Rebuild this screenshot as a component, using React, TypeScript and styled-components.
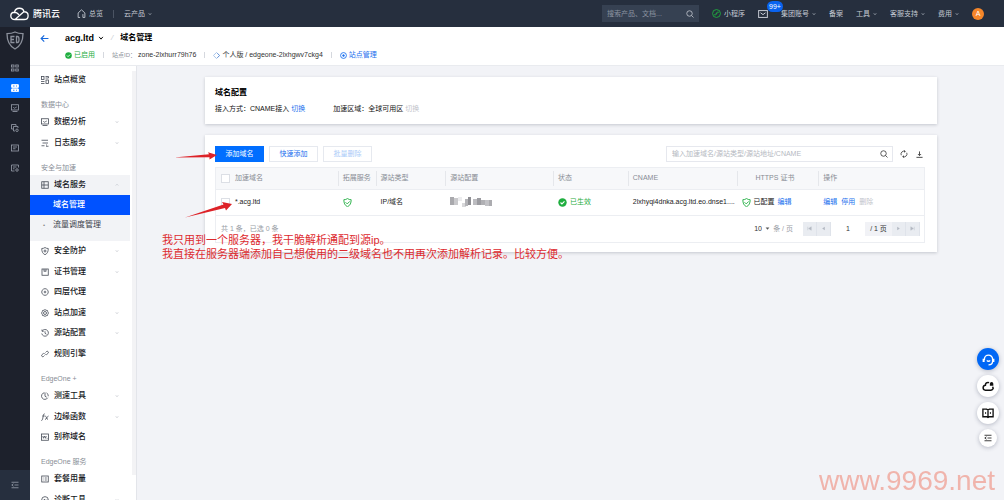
import React from "react";
import styled, { createGlobalStyle, css } from "styled-components";

const GlobalStyle = createGlobalStyle`
  *, *::before, *::after { box-sizing: border-box; }
  body {
    margin: 0;
    background: #f2f3f7;
    color: #111;
    font-family: "Liberation Sans", "Noto Sans CJK SC", sans-serif;
    font-size: 7px;
    line-height: 10px;
  }
  button, input, select { font: inherit; color: inherit; margin: 0; padding: 0; border: 0; background: none; }
  button { cursor: pointer; }
  a { color: inherit; text-decoration: none; }
  h1, h2, ul, p { margin: 0; padding: 0; list-style: none; font-size: inherit; font-weight: inherit; }
`;

/* ---------- icons ---------- */

const Svg = styled.svg<{ $w?: number }>`
  width: ${(p) => p.$w ?? 8}px;
  height: ${(p) => p.$w ?? 8}px;
  flex: none;
  display: block;
  fill: none;
  stroke: currentColor;
  stroke-width: 1.6;
`;

const shapes: Record<string, React.ReactNode> = {
  grid: (
    <>
      <rect x="1" y="1" width="5" height="6" />
      <path d="M0 11h7M0 15h7M9 1h6v3H9" />
      <rect x="10" y="8" width="5" height="7" />
    </>
  ),
  tiles: (
    <>
      <rect x="1" y="2" width="5" height="4" />
      <rect x="9.500" y="2" width="5" height="4" />
      <rect x="1" y="10" width="5" height="4" />
      <rect x="9.500" y="10" width="5" height="4" />
    </>
  ),
  server: (
    <>
      <rect x="1" y="1" width="14" height="6" rx="1" fill="currentColor" />
      <rect x="1" y="9.500" width="14" height="6" rx="1" fill="currentColor" />
      <path d="M4 4h3M10 4h2M4 12.500h3M10 12.500h2" stroke="#006eff" />
    </>
  ),
  monitor: (
    <>
      <rect x="1" y="1.500" width="14" height="10.500" />
      <path d="M3 15h10M4.500 6.500l2 2 2-1 3-1.500" />
    </>
  ),
  copy: (
    <>
      <path d="M4 10H1V1h9v3M8 14H5V5h9v3" />
      <circle cx="12" cy="12.500" r="2.500" />
    </>
  ),
  list: (
    <>
      <rect x="1" y="2" width="14" height="12" />
      <path d="M4 6h8M4 9.500h5" />
    </>
  ),
  listGear: (
    <>
      <path d="M7 14H1V2h14v5M4 6h7M4 9.500h3" />
      <circle cx="12" cy="12" r="2.500" />
    </>
  ),
  log: <path d="M1 2.500h13M3 8h11M1 13.500h6M10 12h2M10 14.500h5" />,
  domain: (
    <>
      <rect x="1.500" y="1.500" width="13" height="13" />
      <path d="M6 1.500v13M1.500 8h13" />
    </>
  ),
  shieldPlus: (
    <>
      <path d="M8 1c2 1.500 4 2 6.500 2 0 6-1.500 10-6.500 12.500C3 13 1.500 9 1.500 3 4 3 6 2.500 8 1z" />
      <path d="M8 5v6M5 8h6" />
    </>
  ),
  shieldCheck: (
    <>
      <path d="M8 1c2 1.500 4 2 6.500 2 0 6-1.500 10-6.500 12.500C3 13 1.500 9 1.500 3 4 3 6 2.500 8 1z" />
      <path d="M4.500 7.500L7.500 10.500 12 6" />
    </>
  ),
  cert: (
    <>
      <rect x="2" y="2" width="12.500" height="12.500" />
      <path d="M6 2v5l2-1.500L10 7V2" />
    </>
  ),
  layers: (
    <>
      <path d="M5 2.200a6.500 6.500 0 0 0 0 11.600M11 2.200a6.500 6.500 0 0 1 0 11.600M5 2.200l3-1 3 1M5 13.800l3 1 3-1" />
      <path d="M8 5.500v5M5.500 8h5" />
    </>
  ),
  gear: (
    <>
      <path d="M8 1l2 1.500 3 .5.500 2.500L15 8l-1.500 2.500L13 13l-3 .5L8 15l-2-1.500L3 13l-.5-2.500L1 8l1.500-2.500L3 3l3-.5z" />
      <circle cx="8" cy="8" r="3" />
    </>
  ),
  clock: (
    <>
      <path d="M2.500 4A6.700 6.700 0 1 1 1.500 9M2 1v3.500h3.500" />
      <path d="M8 4.500V8.500l3 2" />
    </>
  ),
  link: (
    <path d="M9 5l2-2c2-1.500 5 1 3.500 3.200L12 8.500c-1 1-2.500 1-3.500 0M7 11l-2 2c-2 1.500-5-1-3.500-3.200L4 7.500c1-1 2.500-1 3.500 0" />
  ),
  gauge: (
    <>
      <path d="M6.500 1.500a6.700 6.700 0 1 0 7 10" />
      <path d="M8 1v7.500l3.500 2M11 1.800a6.500 6.500 0 0 1 3.500 6.700" />
    </>
  ),
  fx: (
    <path d="M7.500 2C5.500 1 5 3 4.700 5L3 13c-.3 1.500-1.200 2-2.500 1.500M2.500 6h5M8.500 6c2.500 0 2.500 7 5.500 7M15 6c-2.500 0-4 7-7 7" />
  ),
  alias: (
    <>
      <rect x="1" y="2" width="14" height="12.500" />
      <path d="M3.500 6l1.500 4.500L7 6l2 4.500L10.500 6M11.500 10.800h1.500" />
    </>
  ),
  usage: (
    <>
      <rect x="1.500" y="2" width="13" height="12" />
      <path d="M4.500 6h1M7.500 6h4M4.500 10h1M7.500 10h4" />
    </>
  ),
  pulse: (
    <>
      <circle cx="8" cy="8" r="6.700" />
      <path d="M3 9h2.500l1.500-3 2.500 5L11 8h2" />
    </>
  ),
  collapse: <path d="M1 2.500h14M7 8h8M1 13.500h14M5 5.500L1.500 8 5 10.500" />,
  home: <path d="M5.500 15H2V7l6-5.500L14 7v8h-3.500V9" />,
  search: (
    <>
      <circle cx="7" cy="7" r="5.500" />
      <path d="M11 11l4 4" />
    </>
  ),
  mini: (
    <>
      <circle cx="8" cy="8" r="7" />
      <path d="M5.500 11.500c-2-1 0-3 1-2.500M10.500 4.500c2 1 0 3-1 2.500M6.500 11l3-6" />
    </>
  ),
  mail: (
    <>
      <rect x="1" y="2.500" width="14" height="11" />
      <path d="M4 6l4 3 4-3" />
    </>
  ),
  back: <path d="M15 8H2M7.500 2.500L2 8l5.500 5.500" strokeWidth="2" />,
  caret: <path d="M3 5l5 6 5-6" strokeWidth="2.500" />,
  caretUp: <path d="M3 10l5-5 5 5" strokeWidth="2.500" />,
  down: <path d="M2 5h12L8 12z" fill="currentColor" stroke="none" />,
  ok: (
    <>
      <circle cx="8" cy="8" r="7.500" fill="currentColor" stroke="none" />
      <path d="M4.500 8l2.500 2.500 4.500-4.500" stroke="#fff" strokeWidth="2" />
    </>
  ),
  diamond: (
    <>
      <path d="M8 1l7 7-7 7-7-7z" stroke="#9dbbe6" strokeWidth="2" />
      <path d="M10 3l5 5-5 5" stroke="#5f8fd6" strokeWidth="2" />
    </>
  ),
  target: (
    <>
      <circle cx="8" cy="8" r="6.700" strokeWidth="2" />
      <circle cx="8" cy="8" r="2" fill="currentColor" />
    </>
  ),
  refresh: (
    <>
      <path d="M2.500 10.500A6 6 0 0 1 10 2.500M13.500 5.500A6 6 0 0 1 6 13.500" />
      <path d="M8.500 0l3 3-3 2.500zM7.500 16l-3-3 3-2.500z" fill="currentColor" stroke="none" />
    </>
  ),
  download: <path d="M8 1v9M4.500 7L8 10.500 11.500 7M1 14.500h14" strokeWidth="2" />,
  first: <path d="M4 4v8M12 4L6 8l6 4z" fill="currentColor" strokeWidth="1" />,
  prev: <path d="M11 4L5 8l6 4z" fill="currentColor" stroke="none" />,
  next: <path d="M5 4l6 4-6 4z" fill="currentColor" stroke="none" />,
  last: <path d="M12 4v8M4 4l6 4-6 4z" fill="currentColor" strokeWidth="1" />,
  agent: (
    <>
      <path d="M3 8.500V7.500a5 5 0 0 1 10 0v2.500c0 2.500-2 4.500-5 4.500" />
      <path d="M2 7v4M14 7v4" strokeWidth="2.500" />
      <path d="M6 9c1 1.500 3 1.500 4 0" />
    </>
  ),
  cloudUp: (
    <>
      <path d="M9.500 3.500C6.500 2.500 4.500 4.500 4.500 7 .5 7.500.5 13.500 4.500 13.500h7.500c3 0 3.500-3 2-4.500" strokeWidth="2" />
      <path d="M10.500 5a2.300 2.300 0 0 1 4.600 0v2.800h-4.600z" fill="currentColor" stroke="none" />
    </>
  ),
  book: (
    <path d="M8 4v10M1.200 2.800h5L8 4l1.800-1.200h5v10.200h-5L8 14l-1.800-1H1.200zM4 8h1.500M10.500 8H12" strokeWidth="1.800" />
  ),
};

const Icon = ({ name, w }: { name: string; w?: number }) => (
  <Svg viewBox="0 0 16 16" $w={w} aria-hidden="true">
    {shapes[name]}
  </Svg>
);

/* ---------- page frame ---------- */

const Page = styled.div`
  height: 100vh;
  display: flex;
  flex-direction: column;
  overflow: hidden;
`;

const TopBar = styled.header`
  flex: none;
  height: 27px;
  background: #262f3e;
  color: #c4c9d2;
  display: flex;
  align-items: center;
  padding: 0 20px 0 10px;
`;

const Brand = styled.a`
  display: flex;
  align-items: center;
  gap: 4px;
  width: 67px;
  color: #fff;
  font-size: 9px;
  font-weight: 500;
`;

const BrandMark = styled.svg`
  width: 19px;
  height: 14px;
  fill: none;
  stroke: #fff;
  stroke-width: 2.6;
`;

const TopLink = styled.a`
  display: flex;
  align-items: center;
  gap: 3px;
  white-space: nowrap;
`;

const TopDivider = styled.span`
  width: 1px;
  height: 8px;
  margin: 0 10px;
  background: #4b5463;
`;

const TopRight = styled.div`
  margin-left: auto;
  display: flex;
  align-items: center;
  gap: 13px;
`;

const TopSearch = styled.label`
  width: 97px;
  height: 17px;
  padding: 0 5px;
  display: flex;
  align-items: center;
  background: #364152;
  input { flex: 1; min-width: 0; outline: 0; }
  input::placeholder { color: #8b93a0; opacity: 1; }
`;

const MailLink = styled.a`
  position: relative;
  display: block;
`;

const Badge = styled.span`
  position: absolute;
  left: 9px;
  bottom: 7px;
  padding: 0 2px;
  border-radius: 6px;
  background: #0a63f0;
  color: #fff;
  line-height: 11px;
`;

const Avatar = styled.button`
  width: 12px;
  height: 12px;
  border-radius: 50%;
  background: #f5862a;
  color: #fff;
  line-height: 12px;
`;

const Body = styled.div`
  flex: 1;
  min-height: 0;
  display: flex;
`;

const Rail = styled.nav`
  flex: none;
  width: 30px;
  background: #1d212c;
  color: #9ba1ad;
  display: flex;
  flex-direction: column;
`;

const RailLogo = styled.a`
  height: 31px;
  padding-top: 4px;
  svg { display: block; margin: 0 auto; width: 18px; height: 19px; fill: none; stroke: #8b909b; stroke-width: 1.3; }
`;

const RailItem = styled.button<{ $active?: boolean }>`
  height: 20px;
  display: grid;
  place-items: center;
  ${(p) => p.$active && css`background: #006eff; color: #fff;`}
`;

const RailFoot = styled(RailItem)`
  margin-top: auto;
  height: 30px;
  background: #262f3e;
`;

const Workspace = styled.div`
  flex: 1;
  min-width: 0;
  display: flex;
  flex-direction: column;
`;

const SiteHeader = styled.div`
  flex: none;
  height: 39px;
  background: #fff;
  border-bottom: 1px solid #e9ebef;
  padding: 5px 0 0 10px;
  display: flex;
  gap: 15px;
`;

const BackButton = styled.button`
  height: 12px;
  width: 10px;
  color: #1668dc;
`;

const TitleLine = styled.div`
  display: flex;
  align-items: center;
  gap: 7px;
  height: 12px;
  font-size: 8px;
  font-weight: 700;
  color: #000;
  i { color: #c8ccd3; font-weight: 400; }
`;

const SiteSwitch = styled.button`
  display: flex;
  align-items: center;
  gap: 4px;
  font-weight: 700;
  font-size: 9px;
`;

const InfoLine = styled.div`
  display: flex;
  align-items: center;
  margin-top: 6px;
  white-space: nowrap;
`;

const Info = styled.span<{ $tone?: string }>`
  display: flex;
  align-items: center;
  gap: 2px;
  color: ${(p) => p.$tone ?? "#333"};
  & + & {
    margin-left: 8px;
    padding-left: 9px;
    background: linear-gradient(#d5d8de, #d5d8de) left center / 1px 6px no-repeat;
  }
  em { font-style: normal; font-size: 6px; color: #8f949c; }
`;

const Columns = styled.div`
  flex: 1;
  min-height: 0;
  display: flex;
`;

/* ---------- side menu ---------- */

const Side = styled.aside`
  flex: none;
  width: 107px;
  background: #fff;
  border-right: 1px solid #e3e5ea;
  display: flex;
  overflow: hidden;
`;

const Menu = styled.nav`
  width: 100px;
  padding-top: 4px;
`;

const ScrollThumb = styled.div`
  width: 4px;
  height: 93%;
  margin: 5px 0 0 auto;
  background: #f3f3f5;
`;

const SectionLabel = styled.h2`
  padding: 8px 0 0 11px;
  line-height: 14px;
  color: #888d96;
`;

const menuRow = css`
  width: 100%;
  height: 20px;
  display: flex;
  align-items: center;
  font-size: 8px;
  color: #16181d;
`;

const MenuItem = styled.a`
  ${menuRow}
  gap: 5px;
  padding: 0 11px 0 11px;
  font-weight: 500;
  svg:first-child { color: #444a55; }
  span { flex: 1; }
  svg:nth-of-type(2) { color: #b9bdc5; }
`;

const MenuList = styled.ul`
  > li:nth-child(even) { margin-top: 1px; }
`;

const OpenGroup = styled.div`
  background: #f2f3f6;
  padding-bottom: 6px;
`;

const SubItem = styled.a<{ $active?: boolean }>`
  ${menuRow}
  padding-left: 13px;
  color: #3c414a;
  &::before { content: "•"; width: 10px; font-size: 6px; color: ${(p) => (p.$active ? "transparent" : "#888")}; }
  ${(p) => p.$active && css`background: #0052ff; color: #fff; font-weight: 500;`}
`;

type Entry = { icon: string; text: string; more?: boolean };

const MenuRow = ({ icon, text, more, up }: Entry & { up?: boolean }) => (
  <MenuItem href="#">
    <Icon name={icon} />
    <span>{text}</span>
    {more && <Icon name={up ? "caretUp" : "caret"} w={4} />}
  </MenuItem>
);

const MenuGroup = ({ items }: { items: Entry[] }) => (
  <MenuList>
    {items.map((it) => (
      <li key={it.text}><MenuRow {...it} /></li>
    ))}
  </MenuList>
);

/* ---------- content ---------- */

const Main = styled.main`
  flex: 1;
  min-width: 0;
  position: relative;
  padding: 11px 67px 11px 68px;
`;

const Card = styled.section`
  background: #fff;
  padding: 11px 12px 9px 10px;
  box-shadow: 0 1px 3px rgba(40, 50, 70, 0.22);
  & + & { margin-top: 11px; }
`;

const CardTitle = styled.h2`
  font-size: 8px;
  font-weight: 700;
  color: #000;
`;

const Facts = styled.div`
  display: flex;
  gap: 28px;
  margin-top: 6px;
  padding-bottom: 1px;
`;

const Action = styled.button<{ $off?: boolean }>`
  color: ${(p) => (p.$off ? "#bfc3ca" : "#1a6fee")};
  line-height: 10px;
  & + & { margin-left: 4px; }
`;

const Toolbar = styled.div`
  display: flex;
  align-items: center;
  gap: 5px;
  margin-bottom: 5px;
`;

const ToolButton = styled.button<{ $kind?: "primary" | "off" }>`
  width: 49px;
  height: 16px;
  border: 1px solid #e6e9ef;
  color: #1a6fee;
  ${(p) => p.$kind === "primary" && css`background: #006eff; border-color: #006eff; color: #fff;`}
  ${(p) => p.$kind === "off" && css`color: #a9cbf8;`}
`;

const FilterBox = styled.label`
  width: 227px;
  height: 16px;
  margin-left: auto;
  padding: 0 4px 0 5px;
  border: 1px solid #e6e8ee;
  display: flex;
  align-items: center;
  color: #333;
  input { flex: 1; min-width: 0; outline: 0; }
  input::placeholder { color: #b5b9c1; opacity: 1; }
`;

const IconButton = styled.button`
  width: 11px;
  height: 16px;
  display: grid;
  place-items: center;
  color: #333;
`;

const TableBox = styled.div`
  border: 1px solid #eceef2;
`;

const Table = styled.table`
  width: 100%;
  table-layout: fixed;
  border-collapse: collapse;
  text-align: left;
  white-space: nowrap;
  th, td { padding: 0 0 0 5px; overflow: hidden; text-overflow: ellipsis; }
  th { height: 21px; background: #f7f8fa; color: #888c94; font-weight: 400; border-bottom: 1px solid #eceef2; }
  th + th { background: #f7f8fa linear-gradient(#e5e7eb, #e5e7eb) left center / 1px 15px no-repeat; }
  td { height: 26px; color: #222; border-bottom: 1px solid #eceef2; }
`;

const HttpsHead = styled.th`
  && { padding-left: 19px; }
`;

const Cell = styled.div`
  display: flex;
  align-items: center;
  gap: 3px;
`;

const Tick = styled.input`
  appearance: none;
  width: 9px;
  height: 9px;
  border: 1px solid #dcdfe5;
  background: #fff;
  flex: none;
`;

const Green = styled.span`
  color: #1fae3f;
  display: flex;
  align-items: center;
  gap: 3px;
`;

const Mosaic = styled.svg`
  display: block;
  width: 42px;
  height: 10px;
`;

const Footer = styled.div`
  height: 26px;
  padding: 0 4px 0 5px;
  display: flex;
  align-items: center;
  color: #9a9ea6;
`;

const PageSize = styled.label`
  margin-left: auto;
  margin-right: 10px;
  display: flex;
  align-items: center;
  gap: 3px;
  select { appearance: none; color: #333; outline: 0; }
  svg { color: #555; }
`;

const Pager = styled.div`
  display: flex;
  height: 14px;
  background: #e9ecf1;
  color: #333;
  input { width: 34px; text-align: center; background: #fff; outline: 0; }
  span { width: 27px; text-align: center; line-height: 14px; background: #f1f2f6; }
`;

const PagerButton = styled.button`
  width: 14px;
  display: grid;
  place-items: center;
  color: #b3b8c2;
  border-right: 1px solid #dfe3ea;
`;

/* ---------- overlays ---------- */

const Note = styled.p`
  position: absolute;
  left: 25px;
  top: 167px;
  color: #dd2a2e;
  font-size: 11px;
  line-height: 14px;
  white-space: nowrap;
`;

const Arrows = styled.svg`
  position: absolute;
  left: 33px;
  top: 81px;
  width: 70px;
  height: 76px;
  fill: #dd2228;
  pointer-events: none;
`;

const Floaters = styled.div`
  position: fixed;
  right: 5px;
  bottom: 53px;
  display: flex;
  flex-direction: column;
  align-items: center;
  gap: 5px;
`;

const Floater = styled.button<{ $blue?: boolean; $small?: boolean }>`
  width: ${(p) => (p.$small ? 18 : 22)}px;
  height: ${(p) => (p.$small ? 18 : 22)}px;
  border-radius: 50%;
  display: grid;
  place-items: center;
  background: ${(p) => (p.$blue ? "#0067f5" : "#fff")};
  color: ${(p) => (p.$blue ? "#fff" : "#111")};
  box-shadow: 0 1px 4px rgba(40, 50, 80, 0.3);
`;

const Watermark = styled.div`
  position: fixed;
  right: 9px;
  bottom: 3px;
  font-size: 28px;
  line-height: 32px;
  color: #f0b4ac;
`;

const mosaic = [
  [0, 0, 4, 8, "#a9a9ad"], [4, 1, 4, 7, "#c9c9cc"], [8, 0, 4, 4, "#ececee"], [12, 6, 4, 4, "#d8d8da"],
  [15, 2, 3, 7, "#b4b4b8"], [18, 0, 3, 8, "#8f8f94"], [23, 2, 4, 6, "#bcbcc0"], [27, 1, 4, 7, "#9c9ca1"],
  [31, 3, 4, 5, "#b0b0b4"], [35, 3, 4, 6, "#c2c2c6"], [39, 3, 3, 6, "#acacb0"],
] as const;

const topMenus: [string, boolean][] = [["集团账号", true], ["备案", false], ["工具", true], ["客服支持", true], ["费用", true]];

export default function App() {
  return (
    <Page>
      <GlobalStyle />
      <TopBar>
        <Brand href="#">
          <BrandMark viewBox="0 0 38 28">
            <path d="M10 25c-11 0-11-14-1-14.500C11 0 26 0 28 9.500c11 0 11 15.500 0 15.500H10L27 10M9 10.500c4 0 6 1.500 9 5" />
          </BrandMark>
          腾讯云
        </Brand>
        <TopLink href="#"><Icon name="home" w={9} />总览</TopLink>
        <TopDivider />
        <TopLink href="#">云产品<Icon name="caret" w={4} /></TopLink>
        <TopRight>
          <TopSearch>
            <input aria-label="搜索" placeholder="搜索产品、文档..." />
            <Icon name="search" />
          </TopSearch>
          <TopLink href="#"><Green><Icon name="mini" w={9} /></Green>小程序</TopLink>
          <MailLink href="#" aria-label="消息"><Icon name="mail" w={10} /><Badge>99+</Badge></MailLink>
          {topMenus.map(([text, more]) => (
            <TopLink key={text} href="#">{text}{more && <Icon name="caret" w={4} />}</TopLink>
          ))}
          <Avatar>A</Avatar>
        </TopRight>
      </TopBar>

      <Body>
        <Rail>
          <RailLogo href="#" aria-label="EdgeOne">
            <svg viewBox="0 0 18 19">
              <path d="M9 1c2.500 1.300 5 1.700 8 1.700C17 10 14.500 15 9 18 3.500 15 1 10 1 2.700 4 2.700 6.500 2.300 9 1z" />
              <path d="M8.500 5.500H5v6h3.500M5 8.500h3M10.500 5.500h1c2 0 2 6 0 6h-1z" />
            </svg>
          </RailLogo>
          {["tiles", "server", "monitor", "copy", "list", "listGear"].map((n) => (
            <RailItem key={n} $active={n === "server"} aria-label={n}><Icon name={n} /></RailItem>
          ))}
          <RailFoot aria-label="收起"><Icon name="collapse" /></RailFoot>
        </Rail>

        <Workspace>
          <SiteHeader>
            <BackButton aria-label="返回"><Icon name="back" w={9} /></BackButton>
            <div>
              <TitleLine>
                <SiteSwitch>acg.ltd<Icon name="caret" w={6} /></SiteSwitch>
                <i>/</i>
                <h1>域名管理</h1>
              </TitleLine>
              <InfoLine>
                <Info $tone="#1fae3f"><Icon name="ok" w={7} />已启用</Info>
                <Info><em>站点ID：</em>zone-2lxhurr79h76</Info>
                <Info><Icon name="diamond" w={7} />个人版 / edgeone-2lxhgwv7ckg4</Info>
                <Info $tone="#1a6fee" as="a" href="#"><Icon name="target" w={7} />站点管理</Info>
              </InfoLine>
            </div>
          </SiteHeader>

          <Columns>
            <Side>
              <Menu>
                <MenuRow icon="grid" text="站点概览" />
                <SectionLabel>数据中心</SectionLabel>
                <MenuGroup items={[
                  { icon: "monitor", text: "数据分析", more: true },
                  { icon: "log", text: "日志服务", more: true },
                ]} />
                <SectionLabel>安全与加速</SectionLabel>
                <OpenGroup>
                  <MenuRow icon="domain" text="域名服务" more up />
                  <SubItem href="#" $active>域名管理</SubItem>
                  <SubItem href="#">流量调度管理</SubItem>
                </OpenGroup>
                <MenuGroup items={[
                  { icon: "shieldPlus", text: "安全防护", more: true },
                  { icon: "cert", text: "证书管理", more: true },
                  { icon: "layers", text: "四层代理" },
                  { icon: "gear", text: "站点加速", more: true },
                  { icon: "clock", text: "源站配置", more: true },
                  { icon: "link", text: "规则引擎" },
                ]} />
                <SectionLabel>EdgeOne +</SectionLabel>
                <MenuGroup items={[
                  { icon: "gauge", text: "测速工具", more: true },
                  { icon: "fx", text: "边缘函数", more: true },
                  { icon: "alias", text: "别称域名" },
                ]} />
                <SectionLabel>EdgeOne 服务</SectionLabel>
                <MenuGroup items={[
                  { icon: "usage", text: "套餐用量" },
                  { icon: "pulse", text: "诊断工具", more: true },
                ]} />
              </Menu>
              <ScrollThumb />
            </Side>

            <Main>
              <Card>
                <CardTitle>域名配置</CardTitle>
                <Facts>
                  <div>接入方式：CNAME接入 <Action>切换</Action></div>
                  <div>加速区域：全球可用区 <Action $off>切换</Action></div>
                </Facts>
              </Card>

              <Card>
                <Toolbar>
                  <ToolButton $kind="primary">添加域名</ToolButton>
                  <ToolButton>快速添加</ToolButton>
                  <ToolButton $kind="off">批量删除</ToolButton>
                  <FilterBox>
                    <input aria-label="筛选域名" placeholder="输入加速域名/源站类型/源站地址/CNAME" />
                    <Icon name="search" />
                  </FilterBox>
                  <IconButton aria-label="刷新"><Icon name="refresh" /></IconButton>
                  <IconButton aria-label="下载"><Icon name="download" w={7} /></IconButton>
                </Toolbar>
                <TableBox>
                  <Table>
                    <colgroup>
                      {[122, 38, 70, 108, 75, 109, 82, 106].map((w, i) => (
                        <col key={i} style={{ width: `${(w / 710) * 100}%` }} />
                      ))}
                    </colgroup>
                    <thead>
                      <tr>
                        <th><Cell><Tick type="checkbox" aria-label="全选" />&nbsp;加速域名</Cell></th>
                        <th>拓展服务</th>
                        <th>源站类型</th>
                        <th>源站配置</th>
                        <th>状态</th>
                        <th>CNAME</th>
                        <HttpsHead>HTTPS 证书</HttpsHead>
                        <th>操作</th>
                      </tr>
                    </thead>
                    <tbody>
                      <tr>
                        <td><Cell><Tick type="checkbox" aria-label="选择 *.acg.ltd" />&nbsp;*.acg.ltd</Cell></td>
                        <td><Green><Icon name="shieldCheck" w={9} /></Green></td>
                        <td>IP/域名</td>
                        <td>
                          <Mosaic viewBox="0 0 42 10" aria-hidden="true">
                            {mosaic.map(([x, y, w, h, c]) => (
                              <rect key={x} x={x} y={y} width={w} height={h} fill={c} />
                            ))}
                          </Mosaic>
                        </td>
                        <td><Green><Icon name="ok" w={9} />已生效</Green></td>
                        <td>2lxhyqi4dnka.acg.ltd.eo.dnse1....</td>
                        <td><Cell><Green><Icon name="shieldCheck" w={9} /></Green>已配置<Action>编辑</Action></Cell></td>
                        <td><Action>编辑</Action><Action>停用</Action><Action $off>删除</Action></td>
                      </tr>
                    </tbody>
                  </Table>
                  <Footer>
                    共 1 条，已选 0 条
                    <PageSize>
                      <select aria-label="每页条数"><option>10</option></select>
                      <Icon name="down" w={5} />
                      条 / 页
                    </PageSize>
                    <Pager>
                      <PagerButton aria-label="首页"><Icon name="first" w={7} /></PagerButton>
                      <PagerButton aria-label="上一页"><Icon name="prev" w={7} /></PagerButton>
                      <input aria-label="页码" defaultValue="1" />
                      <span>/ 1 页</span>
                      <PagerButton aria-label="下一页"><Icon name="next" w={7} /></PagerButton>
                      <PagerButton aria-label="末页"><Icon name="last" w={7} /></PagerButton>
                    </Pager>
                  </Footer>
                </TableBox>
              </Card>

              <Arrows viewBox="0 0 70 76" aria-hidden="true">
                <path d="M4 10.500L39 7.300 38 5.200 47 8 39.500 12.500 39.500 10.200z" />
                <path d="M15 70.500L53.500 57.500 52 55 62 57 56 63.500 55 61z" />
              </Arrows>
              <Note>
                我只用到一个服务器，我干脆解析通配到源ip。
                <br />
                我直接在服务器端添加自己想使用的二级域名也不用再次添加解析记录。比较方便。
              </Note>
            </Main>
          </Columns>
        </Workspace>
      </Body>

      <Floaters>
        <Floater $blue aria-label="在线客服"><Icon name="agent" w={13} /></Floater>
        <Floater aria-label="反馈"><Icon name="cloudUp" w={12} /></Floater>
        <Floater aria-label="文档"><Icon name="book" w={12} /></Floater>
        <Floater $small aria-label="收起工具"><Icon name="collapse" /></Floater>
      </Floaters>
      <Watermark>www.9969.net</Watermark>
    </Page>
  );
}
